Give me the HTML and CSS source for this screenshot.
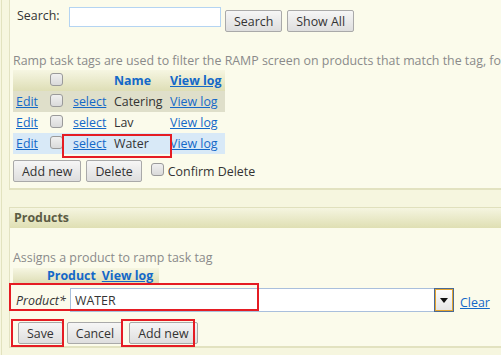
FILE: index.html
```html
<!DOCTYPE html>
<html>
<head>
<meta charset="utf-8">
<title>Ramp task tags</title>
<link rel="stylesheet" href="styles.css">
</head>
<body>
<div class="page">
  <div class="panel top">
    <div class="search">
      <span class="search-label">Search:</span>
      <input type="text" class="search-box">
      <button class="btn">Search</button>
      <button class="btn">Show All</button>
    </div>
    <p class="desc">Ramp task tags are used to filter the RAMP screen on products that match the tag, for example</p>
    <table class="grid">
      <tr class="head">
        <th class="c-edit"></th>
        <th class="c-chk"><span class="chk"></span></th>
        <th class="c-sel"></th>
        <th class="c-name"><a href="#" class="plain">Name</a></th>
        <th class="c-log"><a href="#">View log</a></th>
      </tr>
      <tr class="row alt">
        <td><a href="#">Edit</a></td>
        <td class="c-chk"><span class="chk"></span></td>
        <td><a href="#">select</a></td>
        <td>Catering</td>
        <td><a href="#">View log</a></td>
      </tr>
      <tr class="row">
        <td><a href="#">Edit</a></td>
        <td class="c-chk"><span class="chk"></span></td>
        <td><a href="#">select</a></td>
        <td>Lav</td>
        <td><a href="#">View log</a></td>
      </tr>
      <tr class="row picked">
        <td><a href="#">Edit</a></td>
        <td class="c-chk"><span class="chk"></span></td>
        <td><a href="#">select</a></td>
        <td>Water</td>
        <td><a href="#">View log</a></td>
      </tr>
    </table>
    <div class="actions">
      <button class="btn">Add new</button>
      <button class="btn">Delete</button>
      <span class="chk"></span>
      <span class="confirm">Confirm Delete</span>
    </div>
    <div class="mark mark-water"></div>
  </div>

  <div class="panel products">
    <div class="panel-head">Products</div>
    <div class="panel-body">
      <p class="desc">Assigns a product to ramp task tag</p>
      <div class="sub-head">
        <a href="#" class="plain">Product</a>
        <a href="#">View log</a>
      </div>
      <div class="field">
        <span class="field-label">Product*</span>
        <div class="combo">
          <input type="text" class="combo-input" value="WATER">
          <span class="combo-btn"><span class="arrow"></span></span>
        </div>
        <a href="#" class="clear">Clear</a>
      </div>
      <div class="actions form-actions">
        <button class="btn">Save</button>
        <button class="btn">Cancel</button>
        <button class="btn">Add new</button>
      </div>
    </div>
    <div class="mark mark-field"></div>
    <div class="mark mark-save"></div>
    <div class="mark mark-add"></div>
  </div>
</div>
</body>
</html>
```

FILE: styles.css
```css
* {
  box-sizing: border-box;
  margin: 0;
  padding: 0;
}

body {
  width: 501px;
  height: 355px;
  overflow: hidden;
  background-color: #f6f6df;
  font-family: "Open Sans", "Noto Sans", sans-serif;
  font-size: 12.4px;
  color: #333;
}

a {
  color: #1468c8;
}

.page {
  width: 620px;
  margin-left: 1px;
  border-left: 1px solid #e2e2bf;
  padding-left: 7px;
  height: 355px;
}

.panel {
  position: relative;
  background-color: #fbfbeb;
  border-left: 1px solid #e2e2c2;
  border-bottom: 2px solid #e2e2c0;
}

.top {
  padding: 7px 0 6px 3px;
  height: 190px;
}

.search {
  display: flex;
  align-items: flex-start;
  height: 25px;
  padding-left: 4px;
}

.search-label {
  width: 52px;
  line-height: 18px;
}

.search-box {
  width: 152px;
  height: 20px;
  border: 1px solid #b4d4f2;
  background: #fff;
  margin-right: 4px;
}

.btn {
  font-family: inherit;
  font-size: 12.4px;
  color: #333;
  height: 22px;
  padding: 0 8px;
  margin-right: 5px;
  border: 1px solid #a9a9a9;
  border-radius: 2px;
  background: linear-gradient(#f6f6f6, #dedede);
}

.search .btn {
  margin-top: 3px;
}

.desc {
  color: #8a8a8a;
  white-space: nowrap;
  margin-top: 21px;
  line-height: 16px;
}

.grid {
  border-collapse: collapse;
  width: 212px;
  margin-top: 1px;
}

.grid th,
.grid td {
  height: 21px;
  padding: 0 3px;
  text-align: left;
  white-space: nowrap;
}

.grid .head {
  background: linear-gradient(#f6f6e2, #dedeb6);
}

.grid th a {
  font-weight: bold;
}

a.plain {
  text-decoration: none;
  font-weight: bold;
}

.c-edit { width: 34px; }
.c-chk { width: 23px; }
.c-sel { width: 41px; }
.c-name { width: 56px; }

.row.alt {
  background-color: #dfdfca;
}

.row.picked {
  background-color: #d8e9f7;
}

.chk {
  display: inline-block;
  width: 13px;
  height: 13px;
  border: 1px solid #9a9a9a;
  border-radius: 3px;
  background: linear-gradient(#f0f0f0, #dadada);
  vertical-align: -1px;
}

.actions {
  display: flex;
  align-items: center;
  margin-top: 6px;
}

.actions .chk {
  margin: -4px 4px 0 4px;
}

.products {
  margin-top: 17px;
  border-top: 1px solid #e0e0bd;
  height: 141px;
}

.panel-head {
  height: 20px;
  line-height: 20px;
  padding-left: 4px;
  font-weight: bold;
  color: #5c5c44;
  background: linear-gradient(#f5f5e0, #dfdfb3);
}

.panel-body {
  padding: 22px 0 0 3px;
}

.products .desc {
  margin-top: 0;
}

.sub-head {
  width: 146px;
  height: 15px;
  line-height: 15px;
  margin-top: 2px;
  padding-left: 34px;
  background: linear-gradient(#f6f6e2, #dedeb6);
  display: flex;
  gap: 6px;
}

.sub-head a {
  font-weight: bold;
}

.field {
  display: flex;
  align-items: center;
  height: 28px;
  margin-top: 3px;
}

.field-label {
  font-style: italic;
  width: 57px;
  padding-left: 3px;
}

.combo {
  display: flex;
  width: 384px;
  height: 24px;
}

.combo-input {
  flex: 1;
  border: 1px solid #a9bfdc;
  border-right: none;
  font-family: inherit;
  font-size: 12.4px;
  color: #333;
  padding-left: 4px;
  background: #fff;
}

.combo-btn {
  width: 20px;
  border: 2px solid #e4a533;
  outline: 1px solid #4a6a94;
  outline-offset: -1px;
  background: linear-gradient(#fdfdfd, #e6e6e6);
  display: flex;
  justify-content: center;
  align-items: center;
}

.arrow {
  width: 0;
  height: 0;
  border-left: 4px solid transparent;
  border-right: 4px solid transparent;
  border-top: 5px solid #111;
}

.clear {
  margin-left: 6px;
  margin-top: 4px;
}

.form-actions {
  margin-top: 8px;
  padding-left: 5px;
}

.form-actions .btn {
  margin-right: 4px;
}

.form-actions .btn:nth-child(2) {
  margin-right: 6px;
}

.mark {
  position: absolute;
  border: 2px solid #e51c23;
}

.mark-water {
  left: 52px;
  top: 134px;
  width: 110px;
  height: 24px;
}

.mark-field {
  left: -1px;
  top: 75px;
  width: 250px;
  height: 28px;
}

.mark-save {
  left: 1px;
  top: 111px;
  width: 53px;
  height: 28px;
}

.mark-add {
  left: 111px;
  top: 111px;
  width: 74px;
  height: 28px;
}
```
